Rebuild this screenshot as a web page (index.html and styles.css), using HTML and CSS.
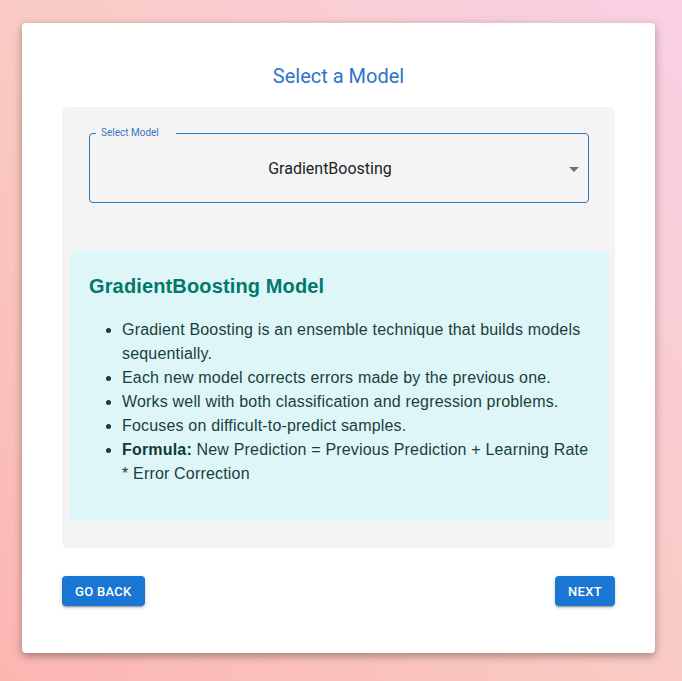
FILE: index.html
```html
<!DOCTYPE html>
<html lang="en">
<head>
<meta charset="utf-8">
<title>Select a Model</title>
<link rel="stylesheet" href="styles.css">
</head>
<body>
<div class="page">
  <div class="card">
    <h2 class="title">Select a Model</h2>
    <div class="panel">
      <fieldset class="select">
        <legend class="select-label">Select Model</legend>
        <div class="select-row">
          <span class="select-value">GradientBoosting</span>
          <svg class="select-arrow" width="24" height="24" viewBox="0 0 24 24" aria-hidden="true"><path d="M7 10l5 5 5-5z"/></svg>
        </div>
      </fieldset>
      <div class="info">
        <h3 class="info-title">GradientBoosting Model</h3>
        <ul class="info-list">
          <li>Gradient Boosting is an ensemble technique that builds models sequentially.</li>
          <li>Each new model corrects errors made by the previous one.</li>
          <li>Works well with both classification and regression problems.</li>
          <li>Focuses on difficult-to-predict samples.</li>
          <li><strong>Formula:</strong> New Prediction = Previous Prediction + Learning Rate * Error Correction</li>
        </ul>
      </div>
    </div>
    <div class="actions">
      <button class="btn">Go Back</button>
      <button class="btn">Next</button>
    </div>
  </div>
</div>
</body>
</html>
```
FILE: styles.css
```css
html, body {
  margin: 0;
  height: 100%;
}
body {
  background: linear-gradient(45deg, #fcb6b2 0%, #f9cbc4 50%, #f9d0e5 100%);
  font-family: Roboto, "Liberation Sans", Arial, sans-serif;
}
.page {
  padding: 23px 27px 28px 22px;
}
.card {
  background: #fff;
  border-radius: 4px;
  box-shadow: 0 3px 8px rgba(0, 0, 0, 0.35);
  padding: 40px 40px 47px;
}
.title {
  margin: 0 0 18px;
  font-family: Roboto, "Liberation Sans", sans-serif;
  font-weight: 400;
  font-size: 20px;
  line-height: 26px;
  color: #2f74c8;
  text-align: center;
}
.panel {
  background: #f4f4f4;
  border-radius: 6px;
  padding: 20px 6px 27px 7px;
}
.select {
  margin: 0 20px;
  padding: 0;
  border: 1px solid #2a78c0;
  border-radius: 4px;
  min-width: 0;
}
.select-label {
  margin-left: 6px;
  padding: 0 17px 0 5px;
  font-size: 10px;
  line-height: 12px;
  color: #3b73c4;
}
.select-row {
  display: flex;
  align-items: center;
  gap: 8px;
  padding: 18px 2px 21px 16px;
}
.select-value {
  flex: 1;
  text-align: center;
  font-size: 16px;
  line-height: 20px;
  color: #222;
}
.select-arrow {
  display: block;
  flex: none;
  fill: rgba(0, 0, 0, 0.54);
}
.info {
  margin-top: 48px;
  background: #dff6f9;
  border-radius: 6px;
  padding: 20px 14px 20px 20px;
  font-family: "Liberation Sans", Arial, sans-serif;
}
.info-title {
  margin: 3px 0 0;
  font-size: 20px;
  line-height: 24px;
  font-weight: 700;
  letter-spacing: 0.14px;
  color: #00796b;
}
.info-list {
  margin: 20px 0 15px;
  padding-left: 33px;
  font-size: 16px;
  line-height: 24px;
  letter-spacing: 0.18px;
  color: #183f3b;
}
.info-list strong {
  color: #0c3a35;
}
.actions {
  display: flex;
  justify-content: space-between;
  margin-top: 28px;
}
.btn {
  height: 30px;
  padding: 0 13px;
  border: 0;
  border-radius: 4px;
  background: #1976d2;
  color: #fff;
  font-family: Roboto, "Liberation Sans", sans-serif;
  font-weight: 500;
  font-size: 13px;
  letter-spacing: 0.3px;
  text-transform: uppercase;
  box-shadow: 0 3px 1px -2px rgba(0,0,0,.2), 0 2px 2px 0 rgba(0,0,0,.14), 0 1px 5px 0 rgba(0,0,0,.12);
  cursor: pointer;
}
```
